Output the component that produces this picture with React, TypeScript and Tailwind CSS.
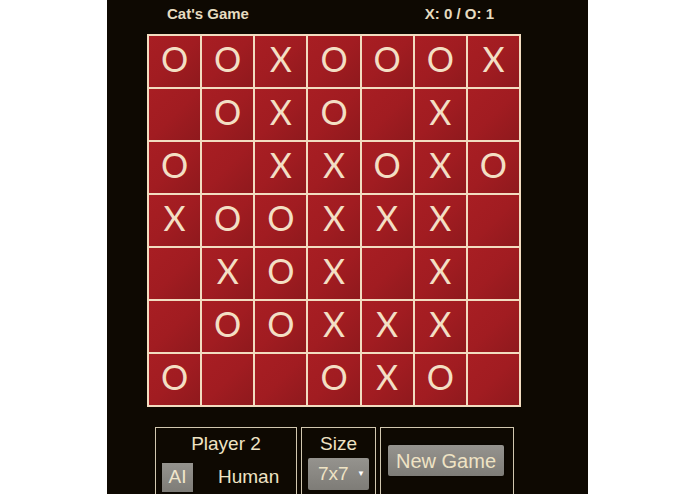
const board = [
  "OOXOOOX",
  " OXO X ",
  "O XXOXO",
  "XOOXXX ",
  " XOX X ",
  " OOXXX ",
  "O  OXO ",
];

const font = { fontFamily: '"Liberation Sans", Arial, sans-serif' };
const markFont = { fontFamily: 'Lato, "Liberation Sans", sans-serif' };

export default function App() {
  return (
    <div className="min-h-screen bg-white" style={font}>
      <div className="mx-auto h-[494px] w-[481px] bg-[#0e0902] pl-10 overflow-hidden">
        <div className="w-[374px]">
          {/* Header */}
          <div className="flex h-[26px] items-center justify-between pl-5 pr-[27px] pt-0.5 text-[15px] font-bold text-[#e6dcc0]">
            <span>Cat's Game</span>
            <span>X: 0 / O: 1</span>
          </div>

          {/* Board */}
          <div className="mt-2 grid grid-cols-7 gap-[2px] bg-[#f2dcc0] p-[2px]">
            {board.flatMap((row, r) =>
              row.split("").map((c, i) => (
                <div
                  key={`${r}-${i}`}
                  className="flex h-[51px] items-center justify-center bg-gradient-to-br from-[#a81e23] via-[#a11c21] to-[#8f191d] pb-[5px] text-[34px] font-normal leading-none text-[#f3dfc4]"
                  style={markFont}
                >
                  {c.trim()}
                </div>
              ))
            )}
          </div>

          {/* Controls */}
          <div className="mt-5 ml-2 flex gap-1 text-[19px] text-[#efe3c4]">
            <div className="h-[80px] w-[142px] border-[1.5px] border-[#d2c8b0] pt-1">
              <div className="text-center leading-6">Player 2</div>
              <div className="mt-[7px] flex items-center pl-[6px]">
                <button className="h-[29px] w-[31px] bg-gradient-to-b from-[#95938e] to-[#7e7c77] text-[19px] text-[#f0e6cc] shadow-[0_0_2px_rgba(0,0,0,0.6)]">
                  AI
                </button>
                <span className="ml-[25px]">Human</span>
              </div>
            </div>
            <div className="h-[80px] w-[75px] border-[1.5px] border-[#d2c8b0] pt-1">
              <div className="text-center leading-6">Size</div>
              <div className="mt-[2px] ml-[6px] flex h-[32px] w-[61px] items-center justify-between rounded-[2px] bg-gradient-to-b from-[#95938e] to-[#7e7c77] pl-[10px] pr-[4px]">
                <span>7x7</span>
                <span className="text-[8px] text-white">▼</span>
              </div>
            </div>
            <div className="h-[80px] w-[134px] border-[1.5px] border-[#d2c8b0] pt-[17px]">
              <button className="ml-[7px] flex h-[31px] w-[116px] items-center justify-center rounded-[2px] bg-gradient-to-b from-[#95938e] to-[#7e7c77] text-[20px] text-[#efe3c4] shadow-[0_0_2px_rgba(0,0,0,0.6)]">
                New Game
              </button>
            </div>
          </div>
        </div>
      </div>
    </div>
  );
}
